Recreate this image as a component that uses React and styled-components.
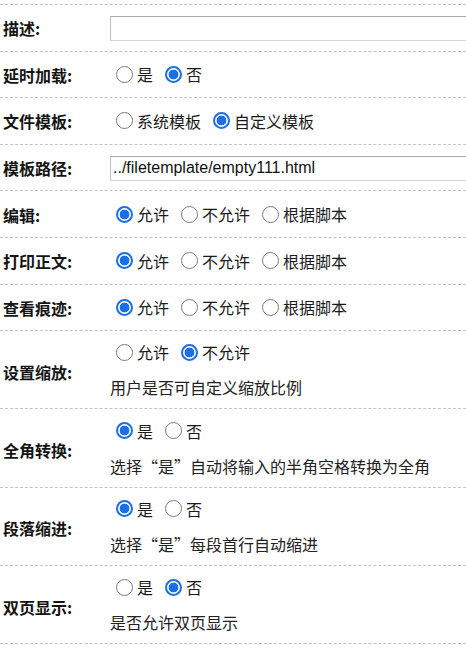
import React from "react";
import styled, { createGlobalStyle } from "styled-components";

const Global = createGlobalStyle`
  html, body { margin: 0; padding: 0; background: #fff; overflow: hidden; }
  body { font-family: "Noto Sans CJK SC", "Liberation Sans", sans-serif; color: #1a1a1a; }
`;

const Form = styled.div`
  margin-top: 4px;
  border-top: 1px dashed #c4c4c4;
  width: 466px;
`;

const Row = styled.div`
  box-sizing: border-box;
  display: grid;
  grid-template-columns: 110px 1fr;
  align-items: center;
  height: ${(p) => (p.$tall ? "78.3px" : "46.6px")};
  border-bottom: 1px dashed #c4c4c4;
`;

const Label = styled.div`
  padding-left: 3px;
  font-family: "Noto Sans CJK SC", sans-serif;
  font-size: 16px;
  font-weight: 700;
  color: #141414;
  line-height: 24px;
  margin-top: ${(p) => (p.$tall ? "4px" : "1px")};
`;

const Field = styled.div`
  min-width: 0;
  overflow: hidden;
  display: flex;
  flex-direction: column;
  justify-content: center;
  gap: 11px;
`;

const Group = styled.div`
  display: flex;
  align-items: center;
  height: 24px;
`;

const Option = styled.label`
  display: flex;
  align-items: center;
  margin-right: ${(p) => (p.$wide ? "8px" : "6px")};
  font-size: 16px;
  line-height: 24px;
  color: #1a1a1a;
  white-space: nowrap;
`;

const Radio = styled.input.attrs({ type: "radio" })`
  appearance: none;
  -webkit-appearance: none;
  box-sizing: border-box;
  width: 17px;
  height: 17px;
  margin: 0 4px 0 6px;
  border-radius: 50%;
  border: 1.5px solid #7a7a7a;
  background: #fff;
  flex: none;
  &:checked {
    border: 2px solid #1b6fe4;
    background: radial-gradient(circle, #1b6fe4 0 4.6px, #fff 5.2px);
  }
`;

const TextInput = styled.input`
  box-sizing: border-box;
  width: 420px;
  height: 25px;
  margin: 1px 0 0 0;
  padding: 0 2px;
  border: 1px solid #d6d6d6;
  border-top-color: #a8a8a8;
  border-left-color: #bdbdbd;
  font-family: "Liberation Sans", Arial, sans-serif;
  font-size: 16px;
  color: #111;
  outline: none;
`;

const Hint = styled.div`
  font-size: 16px;
  line-height: 24px;
  color: #222;
  white-space: nowrap;
`;

function Radios({ name, options, value }) {
  return (
    <Group>
      {options.map((o) => (
        <Option key={o}>
          <Radio name={name} defaultChecked={o === value} />
          {o}
        </Option>
      ))}
    </Group>
  );
}

const rows = [
  { label: "描述:", input: "" },
  { label: "延时加载:", options: ["是", "否"], value: "否" },
  { label: "文件模板:", options: ["系统模板", "自定义模板"], value: "自定义模板" },
  { label: "模板路径:", input: "../filetemplate/empty111.html" },
  { label: "编辑:", options: ["允许", "不允许", "根据脚本"], value: "允许" },
  { label: "打印正文:", options: ["允许", "不允许", "根据脚本"], value: "允许" },
  { label: "查看痕迹:", options: ["允许", "不允许", "根据脚本"], value: "允许" },
  { label: "设置缩放:", options: ["允许", "不允许"], value: "不允许", hint: "用户是否可自定义缩放比例" },
  { label: "全角转换:", options: ["是", "否"], value: "是", hint: "选择“是”自动将输入的半角空格转换为全角" },
  { label: "段落缩进:", options: ["是", "否"], value: "是", hint: "选择“是”每段首行自动缩进" },
  { label: "双页显示:", options: ["是", "否"], value: "否", hint: "是否允许双页显示" },
];

export default function App() {
  return (
    <>
      <Global />
      <Form lang="zh-CN">
        {rows.map((r, i) => (
          <Row key={i} $tall={!!r.hint}>
            <Label $tall={!!r.hint}>{r.label}</Label>
            <Field>
              {r.input !== undefined ? (
                <TextInput defaultValue={r.input} />
              ) : (
                <Radios name={"r" + i} options={r.options} value={r.value} />
              )}
              {r.hint && <Hint>{r.hint}</Hint>}
            </Field>
          </Row>
        ))}
      </Form>
    </>
  );
}
